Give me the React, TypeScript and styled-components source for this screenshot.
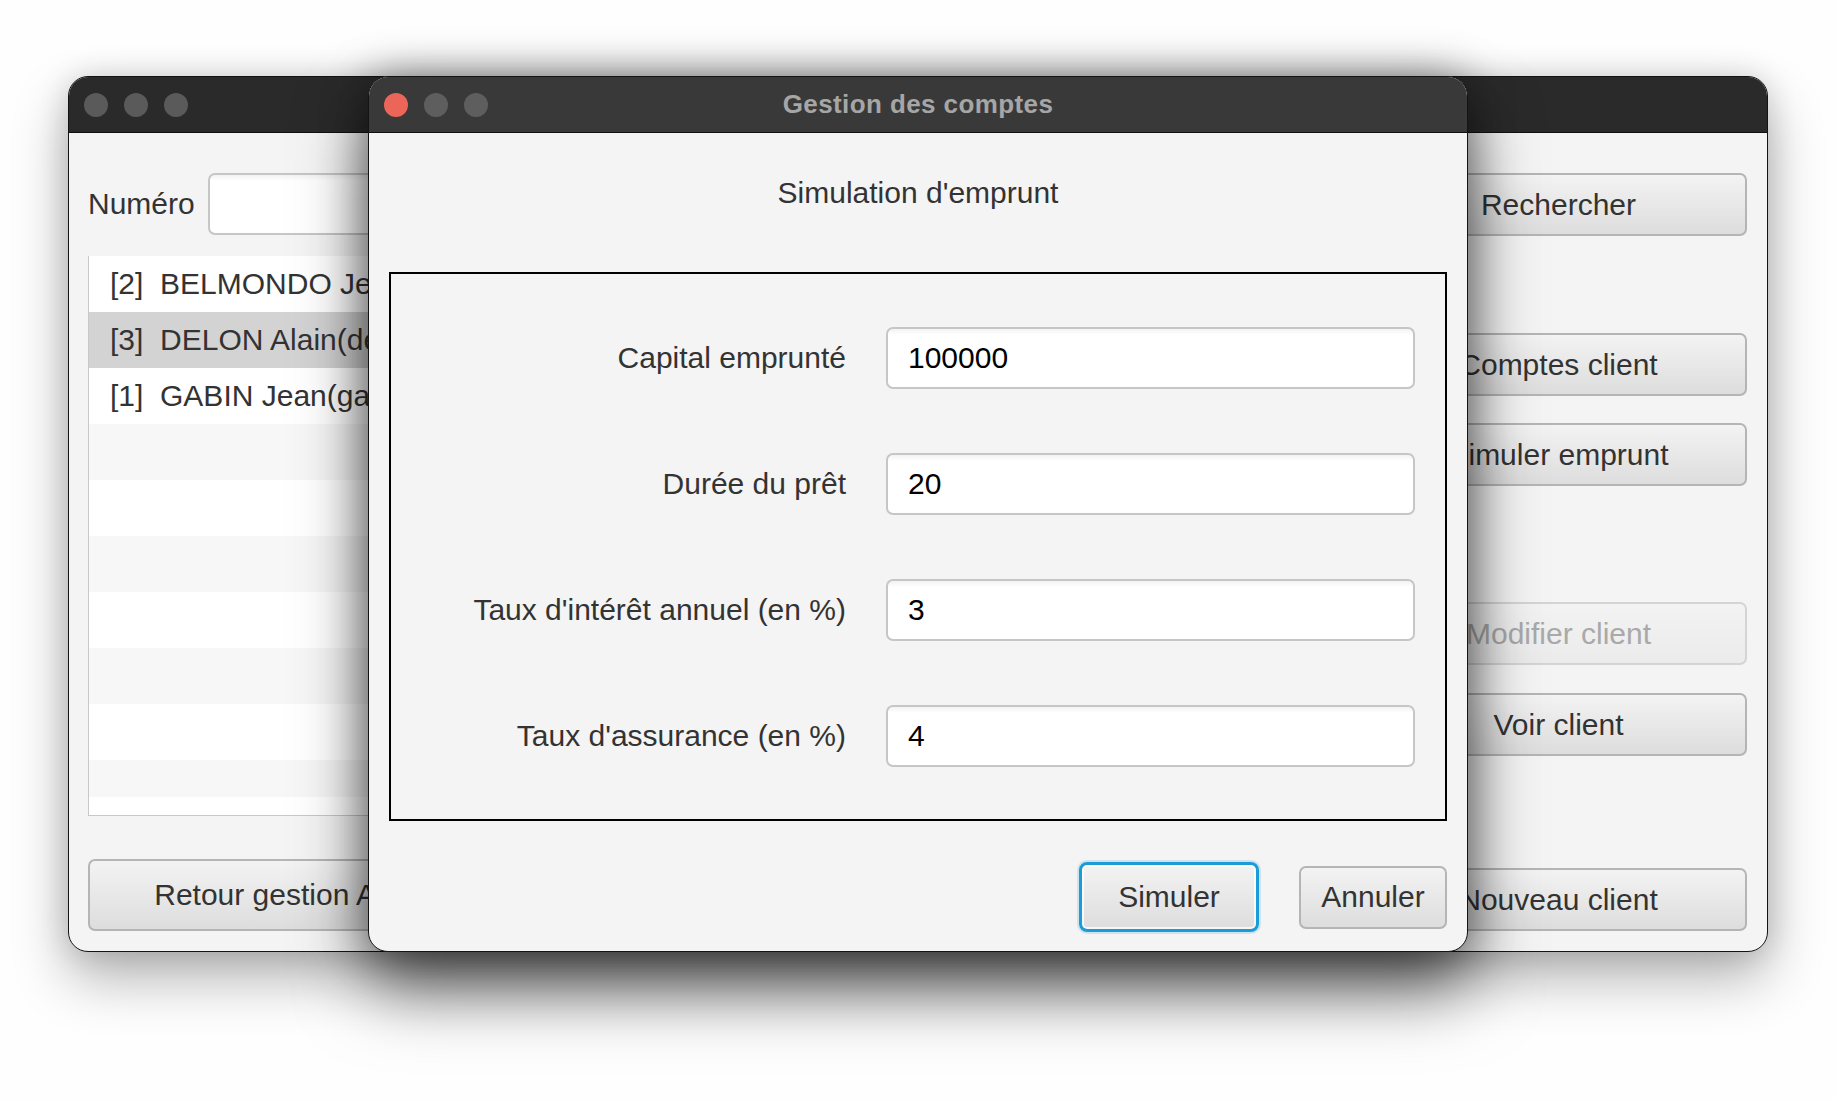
import styled, { createGlobalStyle } from "styled-components";

const GlobalStyle = createGlobalStyle`
  html,
  body {
    margin: 0;
    padding: 0;
    background: #ffffff;
  }
  body {
    font-family: "Liberation Sans", Arial, sans-serif;
  }
  * {
    box-sizing: border-box;
  }
`;

const Desktop = styled.div`
  position: relative;
  width: 1836px;
  height: 1100px;
  overflow: hidden;
  background: #fefefe;
`;

// fenêtres posées sur le bureau
const Window = styled.div<{ $left: number; $width: number; $active?: boolean }>`
  position: absolute;
  top: 76px;
  left: ${(p) => p.$left}px;
  width: ${(p) => p.$width}px;
  height: 876px;
  display: flex;
  flex-direction: column;
  background: #f4f4f4;
  border: 1px solid #141414;
  border-radius: 20px;
  overflow: hidden;
  box-shadow: ${(p) =>
    p.$active
      ? "0 38px 70px rgba(0, 0, 0, 0.55), 0 0 45px rgba(0, 0, 0, 0.4)"
      : "0 26px 55px rgba(0, 0, 0, 0.3), 0 0 30px rgba(0, 0, 0, 0.14)"};
`;

const TitleBar = styled.div<{ $active?: boolean }>`
  height: 56px;
  flex-shrink: 0;
  display: grid;
  grid-template-columns: 1fr auto 1fr;
  align-items: center;
  padding-left: 15px;
  background: ${(p) => (p.$active ? "#393939" : "#2a2a2a")};
  border-bottom: 1px solid #101010;
`;

const Lights = styled.div`
  display: flex;
  gap: 16px;
`;

const Light = styled.span<{ $color: string }>`
  width: 24px;
  height: 24px;
  border-radius: 50%;
  background: ${(p) => p.$color};
`;

const Title = styled.div`
  font-size: 26px;
  font-weight: 700;
  letter-spacing: 0.4px;
  color: #a6a6a6;
  padding-right: 15px;
`;

/* ---------- fenêtre arrière : gestion des clients ---------- */

const BackBody = styled.div`
  flex: 1;
  display: grid;
  grid-template-columns: 1fr 377px;
  grid-template-rows: 62px 1fr 72px;
  column-gap: 20px;
  row-gap: 21px;
  padding: 40px 20px 20px 19px;
`;

const SearchRow = styled.div`
  display: flex;
  align-items: center;
  gap: 13px;
`;

const Label = styled.span`
  font-size: 30px;
  color: #333333;
  white-space: nowrap;
`;

const TextField = styled.input<{ $height?: number }>`
  flex: 1;
  min-width: 0;
  width: 100%;
  height: ${(p) => p.$height ?? 62}px;
  padding: 0 20px;
  border: 2px solid #c6c6c6;
  border-radius: 7px;
  background: linear-gradient(to bottom, #f3f3f3 0px, #ffffff 6px);
  font-family: "Liberation Sans", Arial, sans-serif;
  font-size: 30px;
  color: #000000;
  outline: none;
`;

const List = styled.div`
  height: 560px;
  background: #ffffff;
  border: 1px solid #c8c8c8;
  border-top: none;
`;

const ListViewport = styled.div`
  height: 541px;
  overflow: hidden;
`;

const Row = styled.div<{ $selected?: boolean; $odd?: boolean }>`
  height: 56px;
  display: flex;
  align-items: center;
  padding-left: 21px;
  font-size: 30px;
  color: #333333;
  white-space: pre;
  background: ${(p) =>
    p.$selected ? "#d3d3d3" : p.$odd ? "#f7f7f7" : "#ffffff"};
`;

const SideColumn = styled.div`
  display: flex;
  flex-direction: column;
`;

const Button = styled.button<{
  $width?: number;
  $height?: number;
  $top?: number;
  $disabled?: boolean;
}>`
  width: ${(p) => (p.$width ? `${p.$width}px` : "100%")};
  height: ${(p) => p.$height ?? 63}px;
  margin-top: ${(p) => p.$top ?? 0}px;
  flex-shrink: 0;
  padding: 0;
  border: 2px solid ${(p) => (p.$disabled ? "#d4d4d4" : "#b5b5b5")};
  border-radius: 7px;
  background: ${(p) =>
    p.$disabled
      ? "linear-gradient(to bottom, #f3f3f3, #ebebeb)"
      : "linear-gradient(to bottom, #f3f3f3, #dddddd)"};
  font-family: "Liberation Sans", Arial, sans-serif;
  font-size: 30px;
  white-space: nowrap;
  color: ${(p) => (p.$disabled ? "#a9a9a9" : "#333333")};
  cursor: default;
  &.focused {
    border: 3px solid #1d9bd6;
    border-radius: 8px;
    box-shadow: inset 0 0 0 2px rgba(255, 255, 255, 0.75),
      0 0 0 2px rgba(29, 155, 214, 0.18);
  }
`;

const BottomButton = styled(Button)`
  align-self: end;
`;

const BackButton = styled(Button)`
  justify-self: start;
`;

/* ---------- fenêtre avant : simulation ---------- */

const FrontBody = styled.div`
  flex: 1;
  display: flex;
  flex-direction: column;
  padding: 0 20px;
`;

const Heading = styled.div`
  padding: 42px 0 61px;
  line-height: 36px;
  text-align: center;
  font-size: 30px;
  color: #333333;
`;

const GroupBox = styled.div`
  height: 549px;
  display: grid;
  grid-template-columns: 1fr 529px;
  grid-auto-rows: 62px;
  align-content: start;
  column-gap: 40px;
  row-gap: 64px;
  padding: 53px 30px 0 0;
  border: 2px solid #000000;
`;

const FieldLabel = styled(Label)`
  align-self: center;
  text-align: right;
`;

const ButtonRow = styled.div`
  height: 70px;
  margin-top: 41px;
  display: flex;
  justify-content: flex-end;
  align-items: center;
  gap: 40px;
`;

const clients = [
  "[2]  BELMONDO Jean(jean.belmondo)",
  "[3]  DELON Alain(delon.alain)",
  "[1]  GABIN Jean(gabin.jean)",
];

const fields = [
  { label: "Capital emprunté", value: "100000" },
  { label: "Durée du prêt", value: "20" },
  { label: "Taux d'intérêt annuel (en %)", value: "3" },
  { label: "Taux d'assurance (en %)", value: "4" },
];

export default function App() {
  const rows = Array.from({ length: 10 }, (_, i) => clients[i] ?? "");

  return (
    <Desktop>
      <GlobalStyle />

      <Window $left={68} $width={1700}>
        <TitleBar>
          <Lights>
            <Light $color="#5a5a5a" />
            <Light $color="#5a5a5a" />
            <Light $color="#5a5a5a" />
          </Lights>
        </TitleBar>
        <BackBody>
          <SearchRow>
            <Label>Numéro</Label>
            <TextField defaultValue="" readOnly />
          </SearchRow>
          <Button>Rechercher</Button>

          <List>
            <ListViewport>
              {rows.map((name, i) => (
                <Row key={i} $selected={i === 1} $odd={i % 2 === 1}>
                  {name}
                </Row>
              ))}
            </ListViewport>
          </List>
          <SideColumn>
            <Button $top={77}>Comptes client</Button>
            <Button $top={27}>Simuler emprunt</Button>
            <Button $top={116} $disabled>
              Modifier client
            </Button>
            <Button $top={28}>Voir client</Button>
          </SideColumn>

          <BackButton $width={436} $height={72}>
            Retour gestion Agence
          </BackButton>
          <BottomButton>Nouveau client</BottomButton>
        </BackBody>
      </Window>

      <Window $left={368} $width={1100} $active>
        <TitleBar $active>
          <Lights>
            <Light $color="#ec6559" />
            <Light $color="#5e5e5e" />
            <Light $color="#5e5e5e" />
          </Lights>
          <Title>Gestion des comptes</Title>
        </TitleBar>
        <FrontBody>
          <Heading>Simulation d'emprunt</Heading>
          <GroupBox>
            {fields.map((f) => [
              <FieldLabel key={f.label}>{f.label}</FieldLabel>,
              <TextField key={f.label + "-input"} defaultValue={f.value} />,
            ])}
          </GroupBox>
          <ButtonRow>
            <Button className="focused" $width={180} $height={70}>
              Simuler
            </Button>
            <Button $width={148}>Annuler</Button>
          </ButtonRow>
        </FrontBody>
      </Window>
    </Desktop>
  );
}
